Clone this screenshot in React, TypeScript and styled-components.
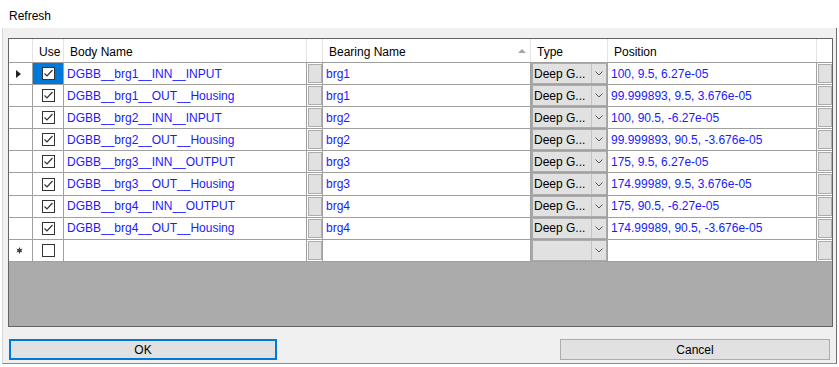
import React from 'react';
import styled, { createGlobalStyle } from 'styled-components';

const Global = createGlobalStyle`
  html, body { margin: 0; padding: 0; background: #ffffff; }
  body { font-family: "Liberation Sans", Arial, sans-serif; font-size: 12px; color: #000; }
  * { box-sizing: border-box; }
`;

const COLS = '24px 31px 243px 16px 208px 77px 209px 15px';

const Window = styled.div`
  width: 839px;
  height: 367px;
  display: flex;
  flex-direction: column;
  background: #ffffff;
  overflow: hidden;
`;

const TitleBar = styled.div`
  height: 28px;
  flex: none;
  display: flex;
  align-items: center;
  padding: 3px 0 0 9px;
  font-size: 12px;
  color: #000;
`;

const Content = styled.div`
  flex: 1;
  margin: 0 2px 3px 2px;
  background: #f0f0f0;
  border-left: 1px solid #d9d9d9;
  border-right: 1px solid #6e6e6e;
  border-bottom: 1px solid #8a8a8a;
  padding: 10px 3px 0 5px;
  display: flex;
  flex-direction: column;
`;

const Grid = styled.div`
  height: 289px;
  flex: none;
  border: 1px solid #646464;
  background: #ababab;
  display: flex;
  flex-direction: column;
  overflow: hidden;
`;

const HeaderRow = styled.div`
  display: grid;
  grid-template-columns: ${COLS};
  height: 24px;
  flex: none;
  background: #ffffff;
  border-bottom: 1px solid #a0a0a0;
`;

const HeaderCell = styled.div<{ $last?: boolean }>`
  display: flex;
  align-items: center;
  padding: 3px 0 0 6px;
  border-right: ${(p) => (p.$last ? 'none' : '1px solid #e3e3e3')};
  color: #000;
  white-space: nowrap;
  overflow: hidden;
`;

const SortGlyph = styled.svg`
  margin-left: auto;
  margin-right: 4px;
  margin-top: -3px;
  flex: none;
`;

const Row = styled.div`
  display: grid;
  grid-template-columns: ${COLS};
  height: 22.1px;
  flex: none;
  background: #ffffff;
`;

const Cell = styled.div<{ $last?: boolean; $selected?: boolean; $pad?: number; $center?: boolean }>`
  display: flex;
  align-items: center;
  justify-content: ${(p) => (p.$center ? 'center' : 'flex-start')};
  padding-left: ${(p) => (p.$pad ?? 0)}px;
  border-right: ${(p) => (p.$last ? 'none' : '1px solid #a0a0a0')};
  border-bottom: 1px solid #a0a0a0;
  background: ${(p) => (p.$selected ? '#0078d7' : '#ffffff')};
  color: #1a1aff;
  white-space: nowrap;
  overflow: hidden;
  min-width: 0;
`;

const RowHeaderCell = styled(Cell)`
  padding-left: 7px;
  color: #000;
`;

const CellButton = styled.div`
  flex: 1;
  align-self: stretch;
  margin: 1px 0 1px 1px;
  background: #e1e1e1;
  border: 1px solid #adadad;
`;

const Combo = styled.div`
  flex: 1;
  align-self: stretch;
  display: flex;
  background: #e1e1e1;
  border: 1px solid #adadad;
  border-left: 2px solid #a8a8a8;
  color: #000;
  min-width: 0;
`;

const ComboText = styled.div`
  flex: 1;
  display: flex;
  align-items: center;
  padding-left: 1px;
  overflow: hidden;
  white-space: nowrap;
`;

const ComboDrop = styled.div`
  width: 15px;
  flex: none;
  display: flex;
  align-items: center;
  justify-content: center;
  border-left: 1px solid #c4c4c4;
`;

const ButtonRow = styled.div`
  display: flex;
  justify-content: space-between;
  margin-top: 12px;
  padding: 0 3px 0 1px;
`;

const DialogButton = styled.button<{ $default?: boolean; $w: number }>`
  width: ${(p) => p.$w}px;
  height: 21px;
  background: #e1e1e1;
  border: ${(p) => (p.$default ? '2px solid #0078d7' : '1px solid #adadad')};
  font-family: "Liberation Sans", Arial, sans-serif;
  font-size: 12px;
  color: #000;
  padding: 1px 0 0 0;
  display: flex;
  align-items: center;
  justify-content: center;
`;

const Check = ({ checked }: { checked: boolean }) => (
  <svg width="13" height="13" viewBox="0 0 13 13">
    <rect x="0.5" y="0.5" width="12" height="12" fill="#ffffff" stroke="#333333" />
    {checked && (
      <polyline points="2.5,6.5 5,9 10.5,3" fill="none" stroke="#333333" strokeWidth="1.2" />
    )}
  </svg>
);

const Chevron = () => (
  <svg width="8" height="5" viewBox="0 0 8 5">
    <polyline points="0.5,0.5 4,4 7.5,0.5" fill="none" stroke="#5a5a5a" strokeWidth="1" />
  </svg>
);

const CurrentArrow = () => (
  <svg width="6" height="8" viewBox="0 0 6 8">
    <polygon points="0,0 5,4 0,8" fill="#222222" />
  </svg>
);

const NewRowStar = () => (
  <svg width="7" height="7" viewBox="0 0 7 7">
    <circle cx="3.5" cy="3.5" r="2" fill="#444444" />
    <path d="M3.5 0.5 V6.5 M0.8 2 L6.2 5 M0.8 5 L6.2 2" stroke="#444444" strokeWidth="1" />
  </svg>
);

const rows: [string, string, string][] = [
  ['DGBB__brg1__INN__INPUT', 'brg1', '100, 9.5, 6.27e-05'],
  ['DGBB__brg1__OUT__Housing', 'brg1', '99.999893, 9.5, 3.676e-05'],
  ['DGBB__brg2__INN__INPUT', 'brg2', '100, 90.5, -6.27e-05'],
  ['DGBB__brg2__OUT__Housing', 'brg2', '99.999893, 90.5, -3.676e-05'],
  ['DGBB__brg3__INN__OUTPUT', 'brg3', '175, 9.5, 6.27e-05'],
  ['DGBB__brg3__OUT__Housing', 'brg3', '174.99989, 9.5, 3.676e-05'],
  ['DGBB__brg4__INN__OUTPUT', 'brg4', '175, 90.5, -6.27e-05'],
  ['DGBB__brg4__OUT__Housing', 'brg4', '174.99989, 90.5, -3.676e-05'],
];

export default function App() {
  return (
    <>
      <Global />
      <Window>
        <TitleBar>Refresh</TitleBar>
        <Content>
          <Grid>
            <HeaderRow>
              <HeaderCell />
              <HeaderCell>Use</HeaderCell>
              <HeaderCell>Body Name</HeaderCell>
              <HeaderCell />
              <HeaderCell>
                Bearing Name
                <SortGlyph width="8" height="4" viewBox="0 0 8 4">
                  <polygon points="0,4 4,0 8,4" fill="#a6a6a6" />
                </SortGlyph>
              </HeaderCell>
              <HeaderCell>Type</HeaderCell>
              <HeaderCell>Position</HeaderCell>
              <HeaderCell $last />
            </HeaderRow>
            {rows.map(([body, bearing, pos], i) => (
              <Row key={i}>
                <RowHeaderCell>{i === 0 && <CurrentArrow />}</RowHeaderCell>
                <Cell $center $selected={i === 0}>
                  <Check checked />
                </Cell>
                <Cell $pad={3}>{body}</Cell>
                <Cell>
                  <CellButton />
                </Cell>
                <Cell $pad={3}>{bearing}</Cell>
                <Cell>
                  <Combo>
                    <ComboText>Deep G...</ComboText>
                    <ComboDrop>
                      <Chevron />
                    </ComboDrop>
                  </Combo>
                </Cell>
                <Cell $pad={3}>{pos}</Cell>
                <Cell $last>
                  <CellButton />
                </Cell>
              </Row>
            ))}
            <Row>
              <RowHeaderCell>
                <NewRowStar />
              </RowHeaderCell>
              <Cell $center>
                <Check checked={false} />
              </Cell>
              <Cell />
              <Cell>
                <CellButton />
              </Cell>
              <Cell />
              <Cell>
                <Combo>
                  <ComboText />
                  <ComboDrop>
                    <Chevron />
                  </ComboDrop>
                </Combo>
              </Cell>
              <Cell />
              <Cell $last>
                <CellButton />
              </Cell>
            </Row>
          </Grid>
          <ButtonRow>
            <DialogButton $default $w={268}>OK</DialogButton>
            <DialogButton $w={270}>Cancel</DialogButton>
          </ButtonRow>
        </Content>
      </Window>
    </>
  );
}
